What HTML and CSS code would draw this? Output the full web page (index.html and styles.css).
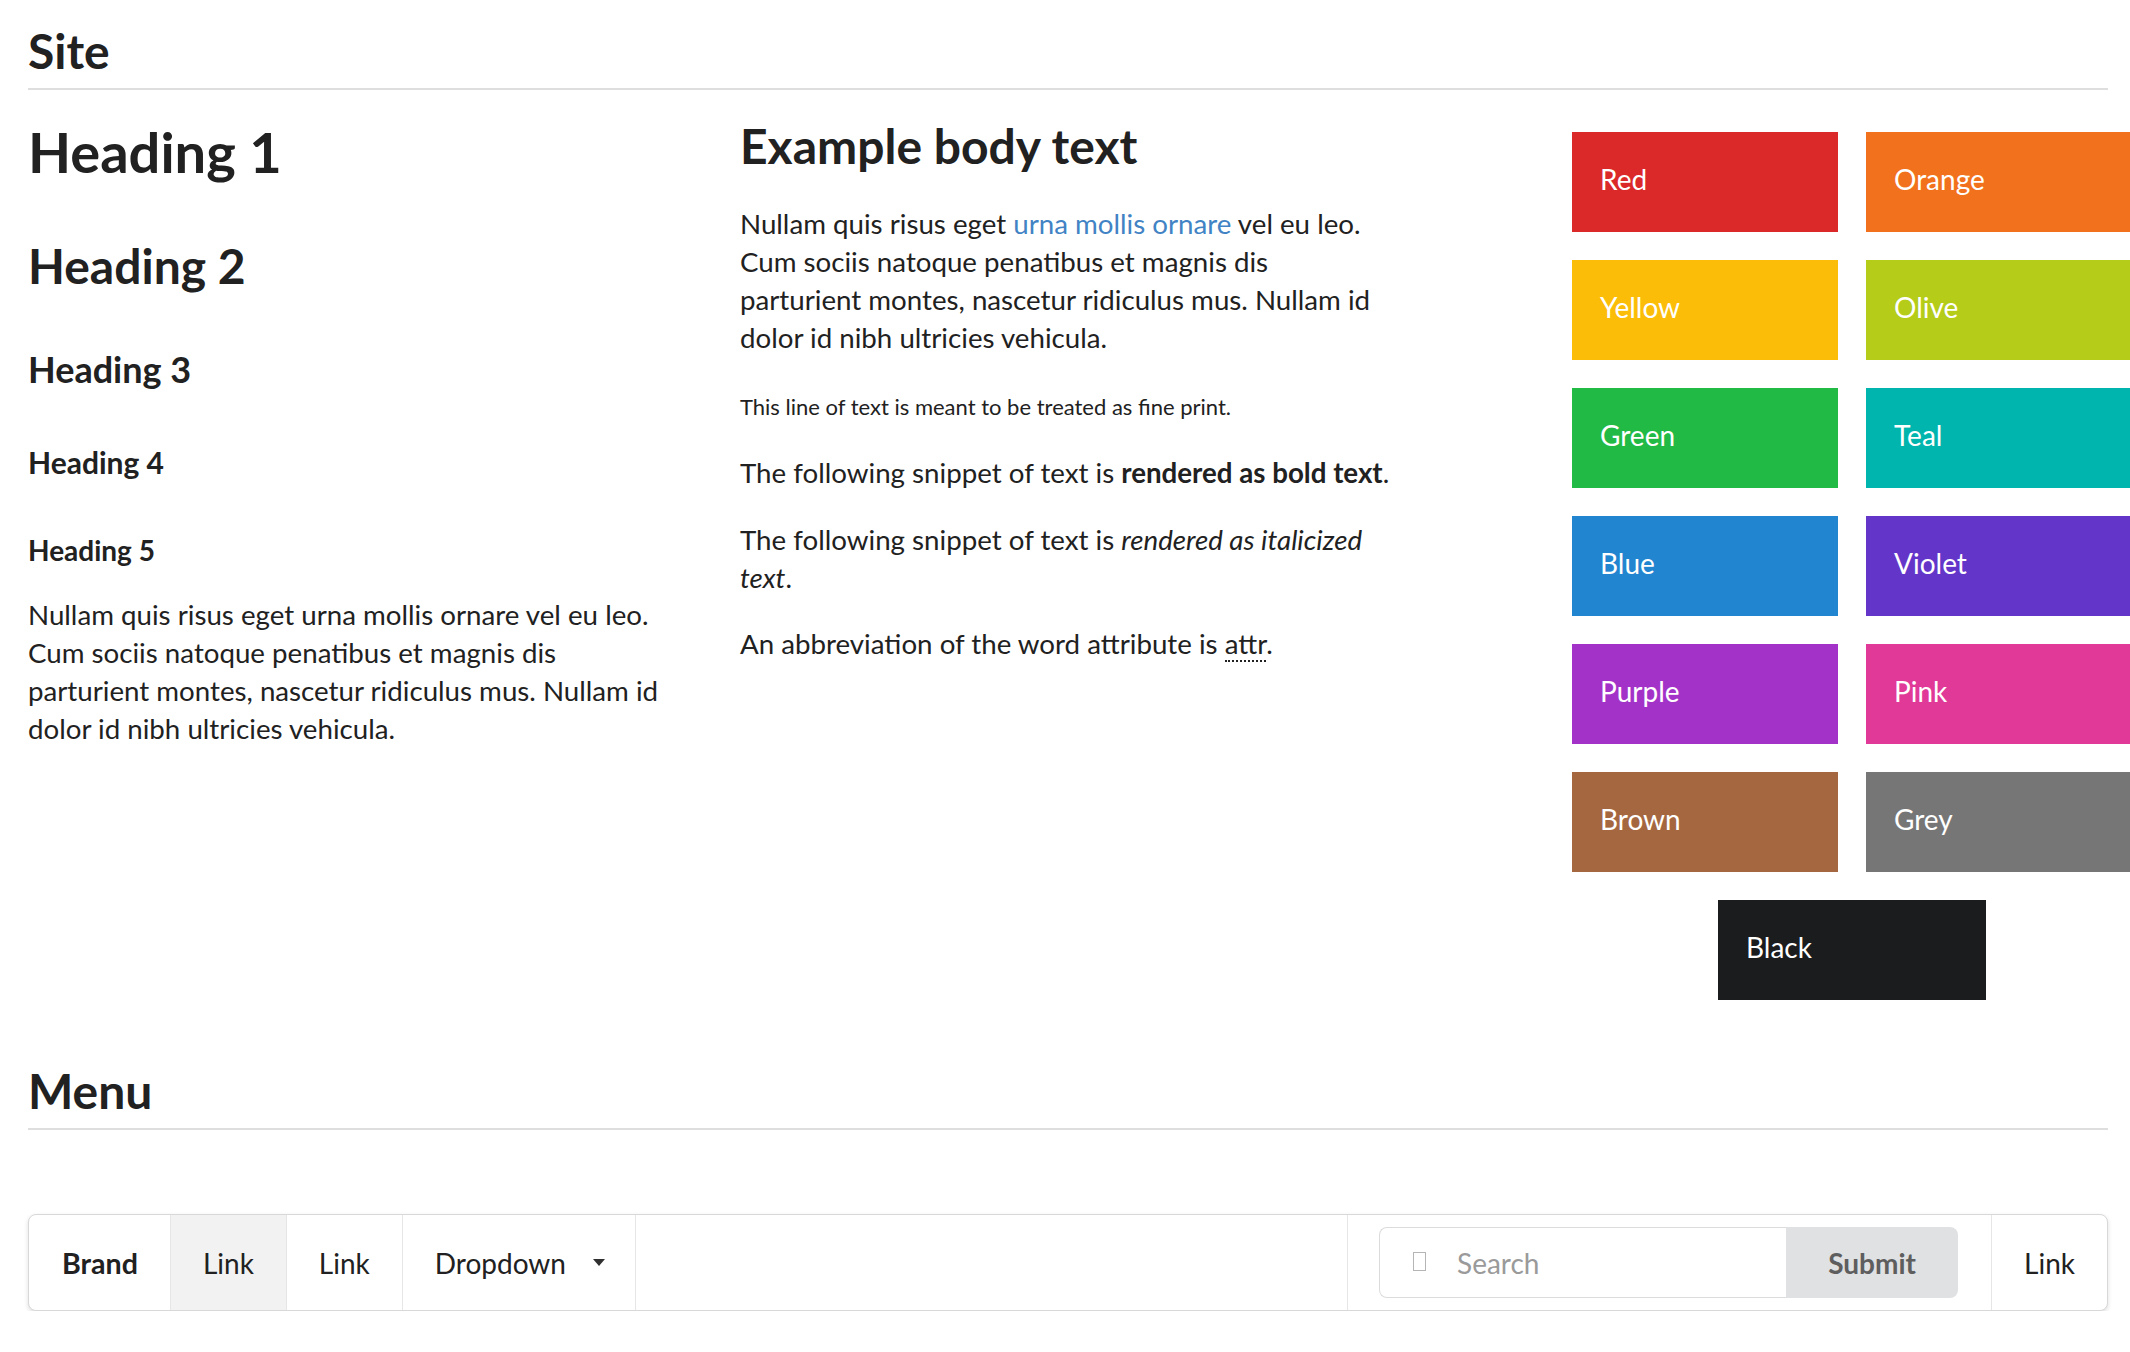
FILE: index.html
```html
<!DOCTYPE html>
<html lang="en">
<head>
<meta charset="utf-8">
<title>Theme preview</title>
<link rel="stylesheet" href="styles.css">
</head>
<body>
<div class="page">
  <h2 class="dividing">Site</h2>
  <div class="site-grid">
    <div class="col headings">
      <h1 class="h1">Heading 1</h1>
      <h2 class="h2">Heading 2</h2>
      <h3 class="h3">Heading 3</h3>
      <h4 class="h4">Heading 4</h4>
      <h5 class="h5">Heading 5</h5>
      <p class="text">Nullam quis risus eget urna mollis ornare vel eu leo. Cum sociis natoque penatibus et magnis dis parturient montes, nascetur ridiculus mus. Nullam id dolor id nibh ultricies vehicula.</p>
    </div>
    <div class="col body-col">
      <h2 class="body-title">Example body text</h2>
      <p class="text">Nullam quis risus eget <a class="link" href="#">urna mollis ornare</a> vel eu leo. Cum sociis natoque penatibus et magnis dis parturient montes, nascetur ridiculus mus. Nullam id dolor id nibh ultricies vehicula.</p>
      <p class="text"><small class="fine">This line of text is meant to be treated as fine print.</small></p>
      <p class="text">The following snippet of text is <strong>rendered as bold text</strong>.</p>
      <p class="text">The following snippet of text is <em>rendered as italicized text</em>.</p>
      <p class="text">An abbreviation of the word attribute is <abbr class="abbr" title="attribute">attr</abbr>.</p>
    </div>
    <div class="col swatch-col">
      <div class="swatches">
        <div class="swatch red">Red</div>
        <div class="swatch orange">Orange</div>
        <div class="swatch yellow">Yellow</div>
        <div class="swatch olive">Olive</div>
        <div class="swatch green">Green</div>
        <div class="swatch teal">Teal</div>
        <div class="swatch blue">Blue</div>
        <div class="swatch violet">Violet</div>
        <div class="swatch purple">Purple</div>
        <div class="swatch pink">Pink</div>
        <div class="swatch brown">Brown</div>
        <div class="swatch grey">Grey</div>
        <div class="swatch black">Black</div>
      </div>
    </div>
  </div>

  <h2 class="dividing menu-title">Menu</h2>
  <nav class="menu">
    <a class="item brand" href="#">Brand</a>
    <a class="item active" href="#">Link</a>
    <a class="item" href="#">Link</a>
    <div class="item dropdown">Dropdown
      <svg class="caret" width="12" height="7" viewBox="0 0 12 7" aria-hidden="true"><path d="M0 0H12L6 7Z" fill="#303030"/></svg>
    </div>
    <div class="right-menu">
      <div class="item search-item">
        <div class="action-input">
          <div class="icon-input">
            <span class="tofu" aria-hidden="true"></span>
            <input class="search" type="text" placeholder="Search">
          </div>
          <button class="submit" type="button">Submit</button>
        </div>
      </div>
      <a class="item" href="#">Link</a>
    </div>
  </nav>
</div>
</body>
</html>
```

FILE: styles.css
```css
* {
  box-sizing: border-box;
}

html {
  overflow: hidden;
}

body {
  margin: 0;
  background: #ffffff;
  color: #212121;
  font-family: Lato, "Open Sans", Arial, sans-serif;
  font-size: 27.7px;
  line-height: 38px;
}

.page {
  padding: 0 22px 0 28px;
}

.dividing {
  margin: 20px 0 0;
  padding-bottom: 6px;
  border-bottom: 2px solid #dedede;
  font-size: 48px;
  line-height: 62px;
  font-weight: 700;
  color: #212121;
}

.site-grid {
  display: grid;
  grid-template-columns: 650px 650px 1fr;
  column-gap: 62px;
  align-items: start;
  margin-top: 26px;
}

.h1, .h2, .h3, .h4, .h5, .body-title {
  margin: 0;
  font-weight: 700;
  color: #212121;
}

.h1 {
  font-size: 56px;
  line-height: 72px;
}

.h2 {
  font-size: 48px;
  line-height: 62px;
  margin-top: 47px;
}

.h3 {
  font-size: 36px;
  line-height: 45px;
  margin-top: 50px;
}

.h4 {
  font-size: 30px;
  line-height: 39px;
  margin-top: 51px;
}

.h5 {
  font-size: 28px;
  line-height: 35px;
  margin-top: 51px;
}

.headings .text {
  margin-top: 28px;
}

.text {
  margin: 0 0 28.5px;
}

.body-title {
  font-size: 48px;
  line-height: 60px;
  margin-bottom: 29px;
}

.link {
  color: #4183c4;
  text-decoration: none;
}

.fine {
  font-size: 22px;
}

.abbr {
  text-decoration: none;
  border-bottom: 2px dotted #212121;
}

/* colour swatches */
.swatches {
  display: grid;
  grid-template-columns: 266px 266px;
  column-gap: 28px;
  row-gap: 28px;
  margin: 16px 0 0 120px;
  width: 560px;
}

.swatch {
  height: 100px;
  padding: 27px 28px 33px;
  color: #ffffff;
  font-size: 28px;
  line-height: 40px;
}

.red { background: #db2828; }
.orange { background: #f2711c; }
.yellow { background: #fbbd08; }
.olive { background: #b5cc18; }
.green { background: #21ba45; }
.teal { background: #00b5ad; }
.blue { background: #2185d0; }
.violet { background: #6435c9; }
.purple { background: #a333c8; }
.pink { background: #e03997; }
.brown { background: #a5673f; }
.grey { background: #767676; }
.black {
  background: #1b1c1d;
  grid-column: 1 / span 2;
  justify-self: center;
  width: 268px;
}

/* menu */
.menu-title {
  margin-top: 60px;
}

.menu {
  display: flex;
  align-items: stretch;
  height: 97px;
  margin-top: 84px;
  border: 1px solid #d8d8d9;
  border-radius: 8px;
  box-shadow: 0 2px 4px rgba(34, 36, 38, 0.15);
  background: #ffffff;
  font-size: 28px;
  line-height: 28px;
}

.item {
  display: flex;
  align-items: center;
  padding: 0 32px;
  color: #212121;
  text-decoration: none;
  border-right: 1px solid #e6e6e6;
}

.brand {
  font-weight: 700;
  font-size: 28.6px;
  padding: 0 32px 0 33px;
  border-radius: 8px 0 0 8px;
}

.active {
  background: #f2f2f2;
}

.dropdown {
  padding-right: 30px;
}

.caret {
  margin-left: 27px;
  display: block;
}

.right-menu {
  display: flex;
  margin-left: auto;
  border-left: 1px solid #e6e6e6;
}

.right-menu .item {
  border-right: none;
}

.right-menu .item + .item {
  border-left: 1px solid #e6e6e6;
}

.search-item {
  padding: 0 33px 0 31px;
}

.action-input {
  display: flex;
  height: 71px;
}

.icon-input {
  position: relative;
  display: flex;
}

.tofu {
  position: absolute;
  left: 34px;
  top: 25px;
  width: 13px;
  height: 19px;
  border: 1px solid #b5b5b5;
}

.search {
  width: 407px;
  height: 71px;
  margin: 0;
  padding: 0 20px 0 77px;
  border: 1px solid #dcdcdc;
  border-right: none;
  border-radius: 8px 0 0 8px;
  font-family: Lato, "Open Sans", Arial, sans-serif;
  font-size: 28px;
  color: #212121;
  outline: none;
}

.search::placeholder {
  color: #9a9a9a;
}

.submit {
  width: 172px;
  height: 71px;
  margin: 0;
  padding: 0;
  border: none;
  border-radius: 0 8px 8px 0;
  background: #e0e1e2;
  color: #5e5e5e;
  font-family: Lato, "Open Sans", Arial, sans-serif;
  font-size: 28px;
  font-weight: 700;
}
```
